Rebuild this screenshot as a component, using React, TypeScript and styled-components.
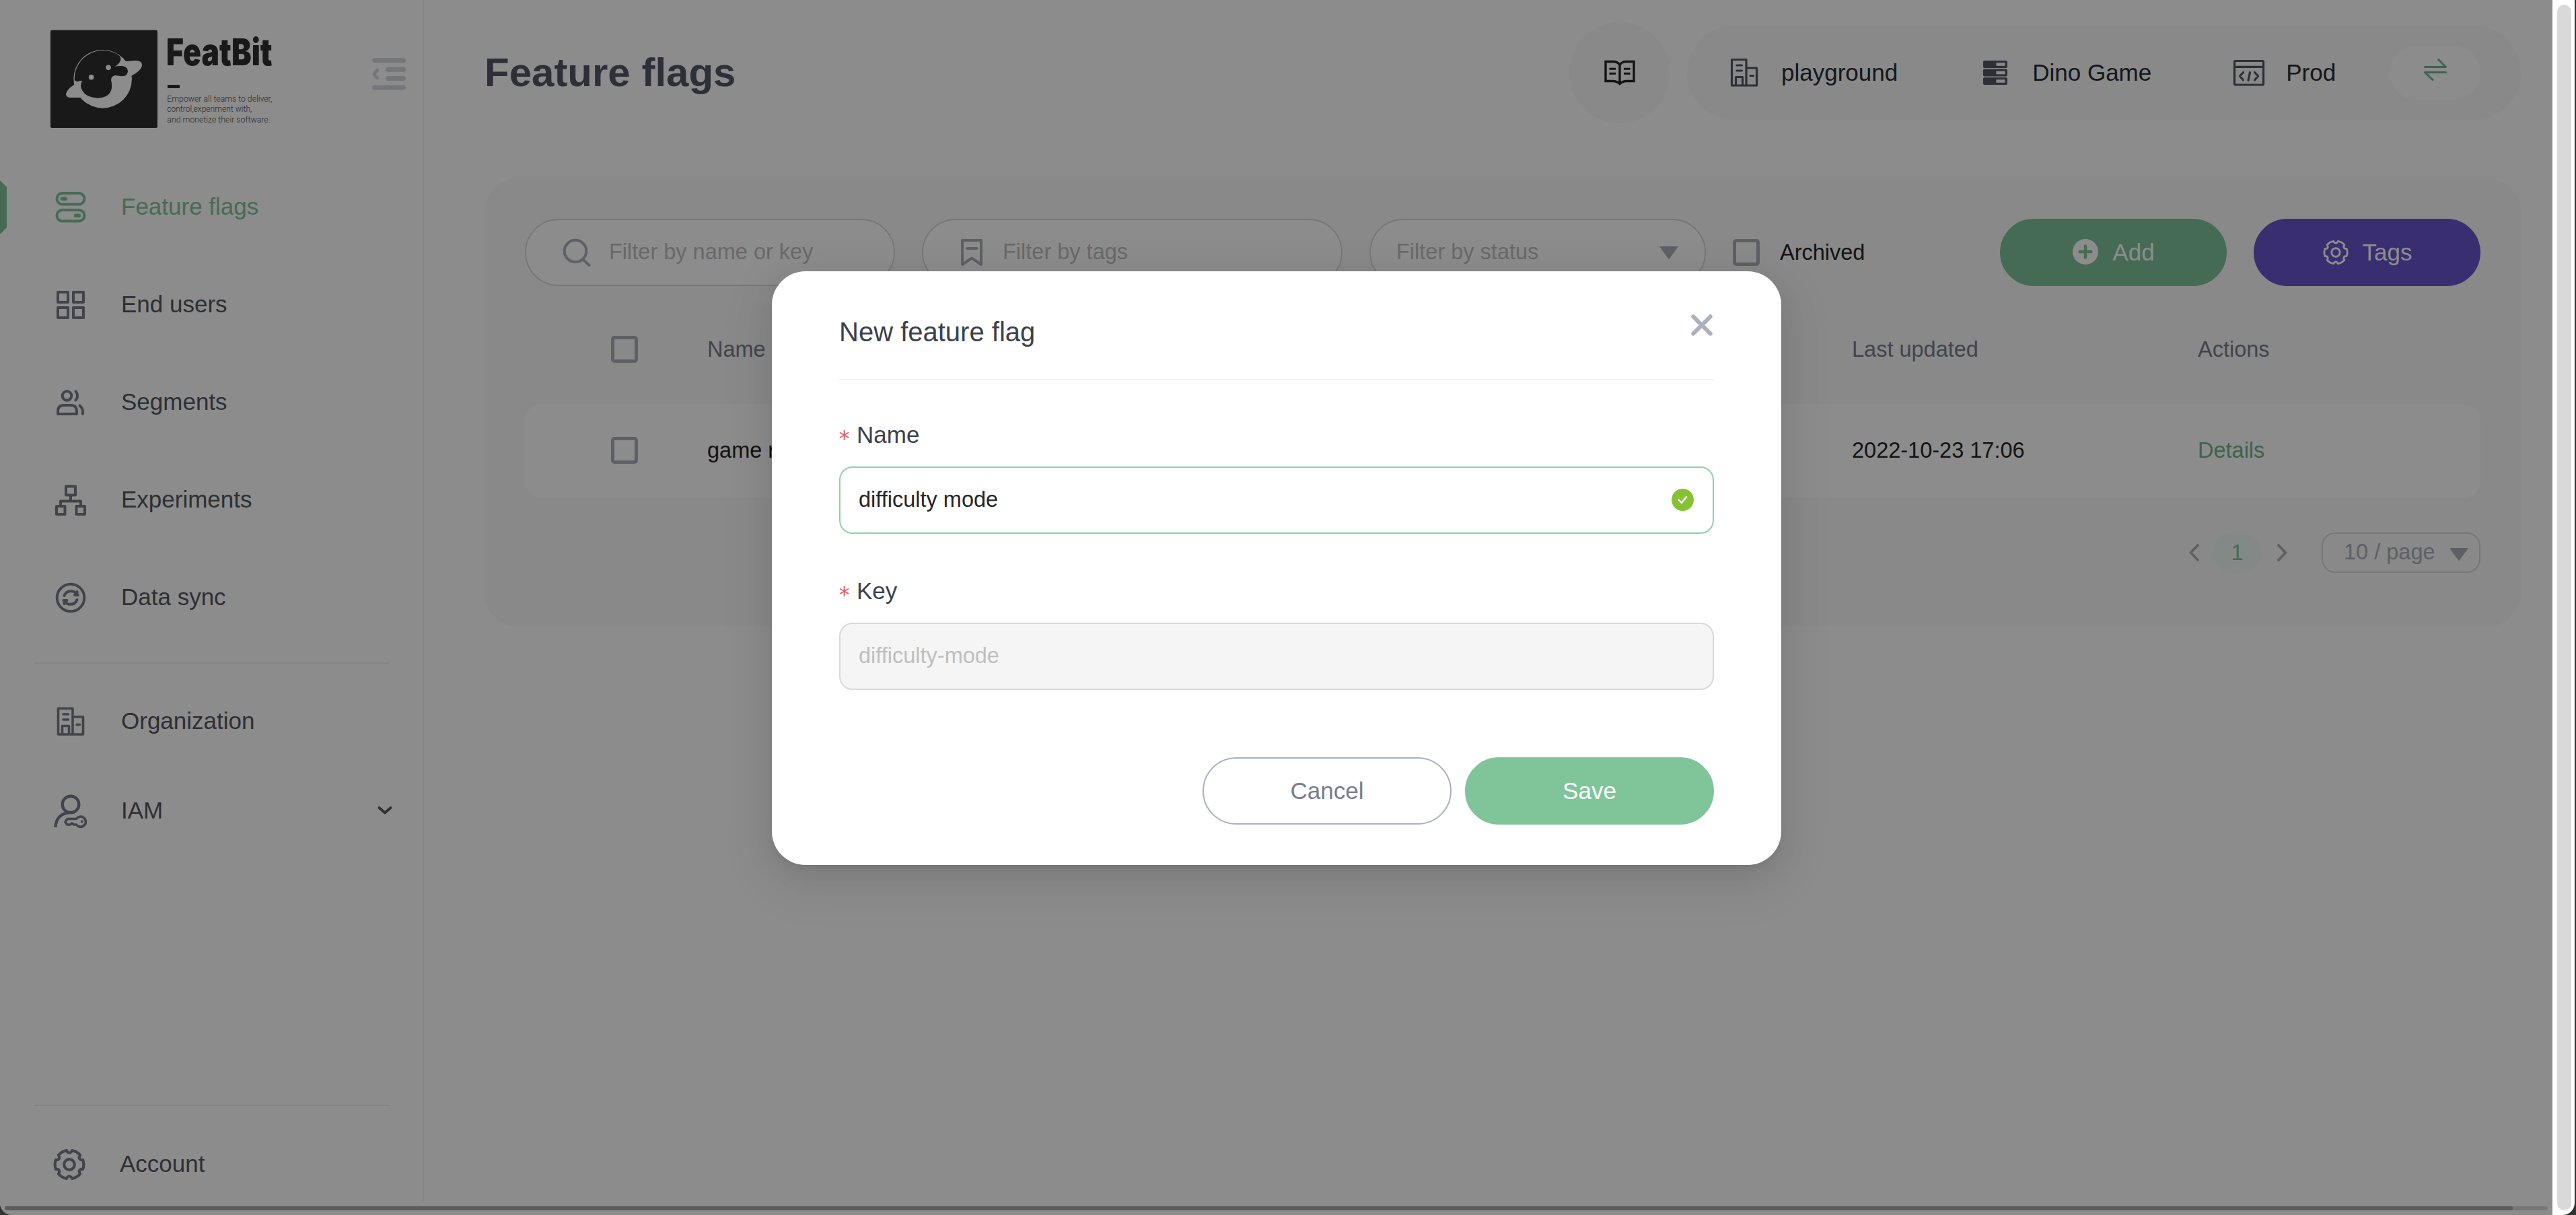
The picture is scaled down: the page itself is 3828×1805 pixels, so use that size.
import React from 'react';
import styled, { createGlobalStyle } from 'styled-components';

const ink = '#53585f';
const slate = '#787d8b';
const mute = '#abb0ba';
const green = '#80c49a';

const GlobalStyle = createGlobalStyle`
  html, body, #root { height: 100%; }
  body {
    margin: 0;
    overflow: hidden;
    background: #333333;
    font-family: "Liberation Sans", Arial, sans-serif;
    font-size: 32.5px;
    color: #262626;
  }
  *, *::before, *::after { box-sizing: border-box; }
  svg { display: block; flex: none; }
`;

const Window = styled.div`
  display: flex;
  width: 3826px;
  height: 1805px;
  border-radius: 0 0 18px 18px;
  overflow: hidden;
  background: #fff;
`;

const Page = styled.div`
  position: relative;
  width: 3793px;
  height: 100%;
  display: flex;
  flex-direction: column;
`;

const Columns = styled.div`
  display: flex;
  height: 1784px;
`;

const ScrollTrack = styled.div`
  height: 6px;
  margin: 8px 7px 0;
  border-radius: 3px;
  background: #d9d9d9;
`;

const ScrollThumb = styled.div`
  width: 3727px;
  height: 6px;
  border-radius: 3px;
  background: #a8a8a8;
`;

const VerticalBar = styled.div`
  flex: 1;
  padding: 7px 5px 7px 7px;
`;

const VerticalThumb = styled.div`
  height: 100%;
  border-radius: 11px;
  background: #d9d9d9;
`;

/* Sidebar */

const Sidebar = styled.aside`
  width: 630px;
  border-right: 2px solid #f0f0f0;
  display: flex;
  flex-direction: column;
`;

const Brand = styled.div`
  height: 235px;
  padding: 30px 25px 0 60px;
  display: flex;
  justify-content: space-between;
`;

const CollapseButton = styled.span`
  margin-top: 56px;
`;

const NavItem = styled.a<{ $tall?: boolean; $active?: boolean }>`
  position: relative;
  height: ${(p) => (p.$tall ? 145 : 133)}px;
  padding: 0 45px 0 80px;
  display: flex;
  align-items: center;
  font-size: 35px;
  color: ${(p) => (p.$active ? green : ink)};
  & > svg:first-child { color: ${(p) => (p.$active ? green : slate)}; }
`;

const NavLabel = styled.span`
  flex: 1;
  margin-left: 50px;
  padding-bottom: 2px;
`;

const ActiveMark = styled.i`
  position: absolute;
  left: 0;
  top: 33px;
  width: 10px;
  height: 80px;
  background: ${green};
  clip-path: polygon(0 0, 100% 10px, 100% 70px, 0 100%);
`;

const Rule = styled.hr`
  width: 528px;
  height: 2px;
  margin: 24px 0 19px 50px;
  border: 0;
  background: #f0f0f0;
`;

const SidebarFooter = styled.div`
  margin-top: auto;
  height: 143px;
`;

const FooterRule = styled(Rule)`
  margin: 0 0 32px 50px;
`;

const AccountItem = styled(NavItem)`
  height: 109px;
  padding-left: 78px;
`;

/* Main */

const Main = styled.main`
  flex: 1;
  padding: 0 47px 0 90px;
`;

const Header = styled.header`
  height: 216px;
  display: flex;
  align-items: center;
`;

const Title = styled.h1`
  flex: 1;
  margin: 0;
  font-size: 60px;
  line-height: 68px;
  color: #525866;
`;

const DocsButton = styled.span`
  width: 150px;
  height: 150px;
  border-radius: 50%;
  background: #f9f9f9;
  display: flex;
  align-items: center;
  justify-content: center;
`;

const ContextBar = styled.div`
  width: 1239px;
  height: 140px;
  margin-left: 25px;
  padding: 0 60px;
  border-radius: 70px;
  background: #f9f9f9;
  display: flex;
  align-items: center;
  gap: 120px;
`;

const ContextItem = styled.span`
  display: flex;
  align-items: center;
  gap: 30px;
  font-size: 35px;
  color: #262c36;
  white-space: nowrap;
  & > svg { color: #525866; }
`;

const SwapButton = styled.span`
  width: 135px;
  height: 80px;
  margin-left: -40px;
  border-radius: 40px;
  background: #fff;
  color: #72b48c;
  display: flex;
  justify-content: center;
  padding-top: 18px;
  flex: none;
`;

const Panel = styled.section`
  margin-top: 49px;
  padding: 60px 60px 80px;
  border-radius: 50px;
  background: #f9f9f9;
`;

const Toolbar = styled.div`
  display: flex;
  align-items: center;
  gap: 40px;
`;

const FilterBox = styled.div<{ $w: number; $pad: string; $gap?: number }>`
  width: ${(p) => p.$w}px;
  height: 100px;
  padding: ${(p) => p.$pad};
  border: 2px solid #d9d9d9;
  border-radius: 50px;
  background: #fff;
  color: #bfbfbf;
  display: flex;
  align-items: center;
  gap: ${(p) => p.$gap ?? 0}px;
  & > span { flex: 1; padding-bottom: 2px; }
  & > svg { color: ${mute}; }
`;

const CheckGroup = styled.label`
  display: flex;
  align-items: center;
  gap: 30px;
`;

const Checkbox = styled.i`
  width: 40px;
  height: 40px;
  border: 5px solid ${mute};
  border-radius: 5px;
`;

const Actions = styled.div`
  margin-left: auto;
  display: flex;
  gap: 40px;
`;

const PillButton = styled.button<{ $bg: string; $fg?: string; $line?: string; $w?: number; $gap?: number }>`
  width: ${(p) => p.$w ?? 337}px;
  height: 100px;
  padding: 0;
  border: 2px solid ${(p) => p.$line ?? p.$bg};
  border-radius: 50px;
  background: ${(p) => p.$bg};
  color: ${(p) => p.$fg ?? '#fff'};
  font: 35px "Liberation Sans", Arial, sans-serif;
  display: flex;
  align-items: center;
  justify-content: center;
  gap: ${(p) => p.$gap ?? 0}px;
`;

const TableRow = styled.div<{ $head?: boolean }>`
  height: ${(p) => (p.$head ? 162 : 140)}px;
  margin-top: ${(p) => (p.$head ? 13 : 0)}px;
  padding: 0 0 ${(p) => (p.$head ? 0 : 2)}px 128px;
  border-radius: 25px;
  background: ${(p) => (p.$head ? 'transparent' : '#fff')};
  color: ${(p) => (p.$head ? slate : '#262626')};
  display: grid;
  grid-template-columns: 143px 1701px 514px 1fr;
  align-items: center;
`;

const DetailsLink = styled.a`
  color: #72b48c;
`;

const Pagination = styled.div`
  margin-top: 51px;
  height: 60px;
  display: flex;
  align-items: center;
  justify-content: flex-end;
  color: ${mute};
`;

const CurrentPage = styled.span`
  width: 71px;
  height: 60px;
  margin: 0 23px 0 20px;
  border-radius: 30px;
  background: #eff9f5;
  color: ${green};
  display: flex;
  align-items: center;
  justify-content: center;
`;

const PageSize = styled.span`
  width: 236px;
  height: 60px;
  margin-left: 51px;
  padding: 0 16px 0 31px;
  border: 2px solid #d9d9d9;
  border-radius: 20px;
  display: flex;
  align-items: center;
  justify-content: space-between;
  & > span { padding-bottom: 2px; }
  & > svg { margin-top: 5px; }
`;

/* Dialog */

const Overlay = styled.div`
  position: absolute;
  inset: 0;
  background: rgba(0, 0, 0, 0.45);
  display: flex;
  align-items: flex-start;
  justify-content: center;
`;

const Dialog = styled.div`
  width: 1500px;
  height: 882px;
  margin: 403px 0 0 1px;
  padding: 20px 100px 60px;
  border-radius: 50px;
  background: #fff;
  box-shadow: 0 7.5px 15px -10px rgba(0, 0, 0, 0.12), 0 15px 40px rgba(0, 0, 0, 0.08),
    0 22.5px 70px 20px rgba(0, 0, 0, 0.05);
`;

const DialogHead = styled.div`
  height: 142px;
  padding-right: 2px;
  border-bottom: 2px solid #f0f1f6;
  display: flex;
  align-items: center;
  justify-content: space-between;
  font-size: 40px;
  color: #3c414b;
  & > svg { margin-bottom: 20px; color: ${mute}; }
`;

const Field = styled.div<{ $gap: number }>`
  padding-top: ${(p) => p.$gap}px;
`;

const FieldLabel = styled.div`
  height: 50px;
  margin-bottom: 22px;
  display: flex;
  align-items: center;
  font-size: 35px;
  color: #3c414b;
`;

const Required = styled.span`
  width: 26px;
  height: 40px;
  font: 32px/50px "DejaVu Sans Mono", monospace;
  color: #e35d58;
  text-indent: -2px;
`;

const TextBox = styled.div<{ $disabled?: boolean }>`
  height: 100px;
  padding: 0 28px 2px 27px;
  border: 2px solid ${(p) => (p.$disabled ? '#d9d9d9' : '#90d0aa')};
  border-radius: 20px;
  background: ${(p) => (p.$disabled ? '#f5f5f5' : '#fff')};
  color: ${(p) => (p.$disabled ? '#bfbfbf' : '#262626')};
  display: flex;
  align-items: center;
  justify-content: space-between;
`;

const DialogFoot = styled.div`
  margin-top: 100px;
  display: flex;
  justify-content: flex-end;
  gap: 20px;
`;

/* Icons */

const Icon = ({ w = 4, children, size = 50 }: { w?: number; size?: number; children: React.ReactNode }) => (
  <svg width={size} height={size} viewBox={`0 0 ${size} ${size}`} fill="none" stroke="currentColor" strokeWidth={w} strokeLinecap="round" strokeLinejoin="round">
    {children}
  </svg>
);

const FlagsIcon = () => (
  <Icon>
    <rect x="4.500" y="4" width="41" height="16.500" rx="8.200" />
    <rect x="4.500" y="29" width="41" height="16.500" rx="8.200" />
    <path d="M12.500 12.300h5M32.500 37.300h5" strokeWidth="5.500" />
  </Icon>
);

const GridIcon = () => (
  <Icon>
    <rect x="6" y="6" width="15" height="15" />
    <rect x="29" y="6" width="15" height="15" />
    <rect x="6" y="29" width="15" height="15" />
    <rect x="29" y="29" width="15" height="15" />
  </Icon>
);

const SegmentsIcon = () => (
  <Icon>
    <circle cx="19.500" cy="15" r="6.800" />
    <path d="M6 42v-4q0-9 9-9h10q9 0 9 9v4zM32.500 8.500a9.500 9.500 0 0 1 0 13M38.500 29.500q4.500 4 4.500 9V42" />
  </Icon>
);

const ExperimentsIcon = () => (
  <Icon>
    <rect x="18" y="4.500" width="14" height="13" />
    <rect x="4" y="34" width="12.500" height="12" />
    <rect x="33.500" y="34" width="12.500" height="12" />
    <path d="M25 18v8M10 34v-7.500h30V34" />
  </Icon>
);

const SyncIcon = () => (
  <Icon>
    <circle cx="25" cy="25" r="20.300" />
    <path d="M15.500 22a10.500 10.500 0 0 1 19-1.500V16M36 21h-5M34.500 28a10.500 10.500 0 0 1-19 1.500V34M14.500 29h5" />
  </Icon>
);

const BuildingIcon = ({ w = 3.6 }: { w?: number }) => (
  <Icon w={w}>
    <path d="M6.500 5.500h21.500v38.500H6.500zM28 18h15.500v26H28M12.500 44V31.500h10V44M14 14h7.500M14 22h7.500M34 29.500h4.500" />
  </Icon>
);

const IamIcon = () => (
  <Icon w={4.4}>
    <circle cx="25" cy="15" r="12.300" />
    <path d="M2.300 49C3 36 11 28 22 27.500" strokeLinecap="butt" />
    <path d="M33.500 36.500a7.600 7.600 0 1 1 0 8.500h-4l-2.500-2-2.500 2h-5l-2.500-4 3-4.500z" strokeWidth="3.600" />
    <circle cx="42" cy="40.500" r="1.200" fill="currentColor" strokeWidth="1.500" />
  </Icon>
);

const gearPath = (() => {
  const pts: string[] = [];
  const at = (r: number, deg: number) => {
    const a = (deg * Math.PI) / 180;
    return `${(25 + r * Math.sin(a)).toFixed(1)} ${(25 - r * Math.cos(a)).toFixed(1)}`;
  };
  for (let i = 0; i < 6; i++) {
    const c = i * 60;
    pts.push(`${i ? 'L' : 'M'}${at(21.3, c + 11)}L${at(21.3, c + 19)}Q${at(22, c + 30)} ${at(21.3, c + 41)}L${at(21.3, c + 49)}Q${at(17.5, c + 52)} ${at(17.5, c + 60)}Q${at(17.5, c + 68)} ${at(21.3, c + 71)}`);
  }
  return `${pts.join('')}Z`;
})();

const GearIcon = ({ size = 50, w = 4.2 }: { size?: number; w?: number }) => (
  <svg width={size} height={size} viewBox="0 0 50 50" fill="none" stroke="currentColor" strokeWidth={w} strokeLinejoin="round">
    <path d={gearPath} />
    <circle cx="25" cy="25" r="7.800" />
  </svg>
);

const ChevronDown = () => (
  <svg width="22" height="14" viewBox="0 0 22 14" fill="none" stroke="currentColor" strokeWidth="3.800" strokeLinecap="round" strokeLinejoin="round">
    <path d="M2.500 2L11 9.500 19.500 2" />
  </svg>
);

const PageArrow = ({ next }: { next?: boolean }) => (
  <svg width="16" height="28" viewBox="0 0 16 28" fill="none" stroke="currentColor" strokeWidth="3.800" strokeLinecap="round" strokeLinejoin="round">
    <path d={next ? 'M3 3l10.500 11L3 25' : 'M13 3L2.500 14 13 25'} />
  </svg>
);

const Caret = () => (
  <svg width="28" height="19" viewBox="0 0 28 19" fill="currentColor">
    <path d="M1 0h26q1 0 .5 1L15 18q-1 1.300-2 0L.5 1Q0 0 1 0z" />
  </svg>
);

const CollapseIcon = () => (
  <svg width="50" height="48" viewBox="0 0 50 48" fill="none" stroke="#d5d7dd" strokeWidth="7" strokeLinecap="round" strokeLinejoin="round">
    <path d="M3.500 3.700h43M23.500 17.200h23M23.500 30.500h23M3.500 44h43" />
    <path d="M7.500 18L3 24l4.500 6" strokeWidth="5" />
  </svg>
);

const Logo = () => (
  <svg width="370" height="170" viewBox="0 0 1110 510">
    <rect x="45" y="44" width="477" height="436" rx="7" fill="#2e2e2e" />
    <g fill="#fff">
      <circle cx="278" cy="262" r="130" />
      <path d="M360 176Q372 184 384 183L425 180Q456 180 453 203Q449 224 408 247L370 260Z" />
      <path d="M151 287Q115 310 114 331Q116 345 134 345H185L200 290Z" />
    </g>
    <path
      fill="#2e2e2e"
      d="M152 265A127 127 0 0 1 352 158Q362 168 356 182Q350 196 332 206Q352 203 370 205Q390 210 390 229Q387 251 362 250L334 246Q315 248 315 268Q320 280 318 302Q311 345 255 347Q189 343 180 294Q180 282 187 269L165 273Q153 273 152 265Z"
    />
    <circle cx="303" cy="211" r="11.500" fill="#fff" />
    <circle cx="227" cy="254" r="11.500" fill="#fff" />
    <g fill="#2e2e2e">
      <g transform="translate(561 202) scale(0.691 1)">
        <text fontSize="166" fontWeight="900" fontFamily="Inter, Liberation Sans, sans-serif" textLength="684" lengthAdjust="spacingAndGlyphs">
          FeatBit
        </text>
      </g>
      <rect x="567" y="288" width="54" height="15" />
    </g>
    <g fill="#4a4a4a" fontSize="38" fontWeight="300" fontFamily="Roboto, Liberation Sans, sans-serif">
      <text x="565" y="363" textLength="468" lengthAdjust="spacingAndGlyphs">Empower all teams to deliver,</text>
      <text x="565" y="409" textLength="378" lengthAdjust="spacingAndGlyphs">control,experiment with,</text>
      <text x="565" y="455" textLength="460" lengthAdjust="spacingAndGlyphs">and monetize their software.</text>
    </g>
  </svg>
);

const BookIcon = () => (
  <svg width="46" height="38" viewBox="0 0 46 38" fill="none" stroke="#262626" strokeWidth="3.400">
    <path d="M2 2.500h11q7 0 10 5q3-5 10-5h11v29H33q-6 0-10 4q-4-4-10-4H2zM23 7v28" />
    <path d="M7.500 13.300H17M7.500 20.300H17M29 13.300h9.500M29 20.300h9.500" strokeWidth="3" />
  </svg>
);

const ServerIcon = () => (
  <Icon>
    {[7, 19.5, 32].map((y) => (
      <g key={y} stroke="none">
        <rect x="7" y={y} width="36" height="11" rx="2" fill="currentColor" />
        <rect x="26.500" y={y + 3.2} width="13" height="4.600" fill="#f9f9f9" />
      </g>
    ))}
  </Icon>
);

const CodeIcon = () => (
  <Icon w={3.2}>
    <rect x="3.500" y="7.500" width="43" height="35.500" rx="1.500" />
    <path d="M3.500 16.300h43M16.500 24.500L11.500 30l5 6M33.500 24.500l5 5.500-5 6M26.500 24.500l-2.500 12" />
  </Icon>
);

const SwapIcon = () => (
  <svg width="34" height="34" viewBox="0 0 34 34" fill="none" stroke="currentColor" strokeWidth="3" strokeLinecap="round" strokeLinejoin="round">
    <path d="M1.500 13.500h31L21.500 2.500M32.500 21.500h-31l11.500 11" />
  </svg>
);

const SearchIcon = () => (
  <Icon w={4}>
    <circle cx="23" cy="23" r="16.300" />
    <path d="M35 36l8.500 8" />
  </Icon>
);

const BookmarkIcon = () => (
  <Icon w={4}>
    <path d="M11 7h28v36l-14-9.500L11 43zM18 19h14.500" />
  </Icon>
);

const PlusIcon = () => (
  <svg width="40" height="40" viewBox="0 0 40 40">
    <circle cx="20" cy="19" r="19" fill="#fff" />
    <path d="M20 10.500v17M11.500 19h17" stroke={green} strokeWidth="4.400" strokeLinecap="round" />
  </svg>
);

const CloseIcon = () => (
  <svg width="32" height="32" viewBox="0 0 32 32" stroke="currentColor" strokeWidth="6" strokeLinecap="round">
    <path d="M3.300 3.300l25.400 25.400M28.700 3.300L3.300 28.700" />
  </svg>
);

const CheckIcon = () => (
  <svg width="33" height="33" viewBox="0 0 33 33" fill="none">
    <circle cx="16.500" cy="16.500" r="16.500" fill="#86c232" />
    <path d="M10 15.800l5 5.200 7.700-9.700" stroke="#fff" strokeWidth="2.400" />
  </svg>
);

const mainNav = [
  { label: 'Feature flags', icon: <FlagsIcon />, active: true },
  { label: 'End users', icon: <GridIcon /> },
  { label: 'Segments', icon: <SegmentsIcon /> },
  { label: 'Experiments', icon: <ExperimentsIcon /> },
  { label: 'Data sync', icon: <SyncIcon /> },
];

export default function App() {
  return (
    <>
      <GlobalStyle />
      <Window>
        <Page>
          <Columns>
            <Sidebar>
              <Brand>
                <Logo />
                <CollapseButton>
                  <CollapseIcon />
                </CollapseButton>
              </Brand>
              {mainNav.map((n) => (
                <NavItem key={n.label} $tall $active={n.active}>
                  {n.icon}
                  <NavLabel>{n.label}</NavLabel>
                  {n.active && <ActiveMark />}
                </NavItem>
              ))}
              <Rule />
              <NavItem>
                <BuildingIcon />
                <NavLabel>Organization</NavLabel>
              </NavItem>
              <NavItem>
                <IamIcon />
                <NavLabel>IAM</NavLabel>
                <ChevronDown />
              </NavItem>
              <SidebarFooter>
                <FooterRule />
                <AccountItem>
                  <GearIcon />
                  <NavLabel>Account</NavLabel>
                </AccountItem>
              </SidebarFooter>
            </Sidebar>
            <Main>
              <Header>
                <Title>Feature flags</Title>
                <DocsButton>
                  <BookIcon />
                </DocsButton>
                <ContextBar>
                  <ContextItem>
                    <BuildingIcon w={3.2} />
                    playground
                  </ContextItem>
                  <ContextItem>
                    <ServerIcon />
                    Dino Game
                  </ContextItem>
                  <ContextItem>
                    <CodeIcon />
                    Prod
                  </ContextItem>
                  <SwapButton>
                    <SwapIcon />
                  </SwapButton>
                </ContextBar>
              </Header>
              <Panel>
                <Toolbar>
                  <FilterBox $w={550} $pad="0 20px 0 50px" $gap={23}>
                    <SearchIcon />
                    <span>Filter by name or key</span>
                  </FilterBox>
                  <FilterBox $w={625} $pad="0 20px 0 47px" $gap={21}>
                    <BookmarkIcon />
                    <span>Filter by tags</span>
                  </FilterBox>
                  <FilterBox $w={500} $pad="0 39px 0 38px">
                    <span>Filter by status</span>
                    <Caret />
                  </FilterBox>
                  <CheckGroup>
                    <Checkbox />
                    Archived
                  </CheckGroup>
                  <Actions>
                    <PillButton $bg={green} $gap={20}>
                      <PlusIcon />
                      Add
                    </PillButton>
                    <PillButton $bg="#6655cc" $gap={20}>
                      <GearIcon size={40} w={3.6} />
                      Tags
                    </PillButton>
                  </Actions>
                </Toolbar>
                <TableRow $head>
                  <Checkbox />
                  <span>Name</span>
                  <span>Last updated</span>
                  <span>Actions</span>
                </TableRow>
                <TableRow>
                  <Checkbox />
                  <span>game runner</span>
                  <span>2022-10-23 17:06</span>
                  <DetailsLink>Details</DetailsLink>
                </TableRow>
                <Pagination>
                  <PageArrow />
                  <CurrentPage>1</CurrentPage>
                  <PageArrow next />
                  <PageSize>
                    <span>10 / page</span>
                    <Caret />
                  </PageSize>
                </Pagination>
              </Panel>
            </Main>
          </Columns>
          <ScrollTrack>
            <ScrollThumb />
          </ScrollTrack>
          <Overlay>
            <Dialog>
              <DialogHead>
                New feature flag
                <CloseIcon />
              </DialogHead>
              <Field $gap={56}>
                <FieldLabel>
                  <Required>*</Required>
                  Name
                </FieldLabel>
                <TextBox>
                  difficulty mode
                  <CheckIcon />
                </TextBox>
              </Field>
              <Field $gap={60}>
                <FieldLabel>
                  <Required>*</Required>
                  Key
                </FieldLabel>
                <TextBox $disabled>difficulty-mode</TextBox>
              </Field>
              <DialogFoot>
                <PillButton $w={370} $bg="#fff" $line={mute} $fg={slate}>
                  Cancel
                </PillButton>
                <PillButton $w={370} $bg="#80c49a">
                  Save
                </PillButton>
              </DialogFoot>
            </Dialog>
          </Overlay>
        </Page>
        <VerticalBar>
          <VerticalThumb />
        </VerticalBar>
      </Window>
    </>
  );
}
